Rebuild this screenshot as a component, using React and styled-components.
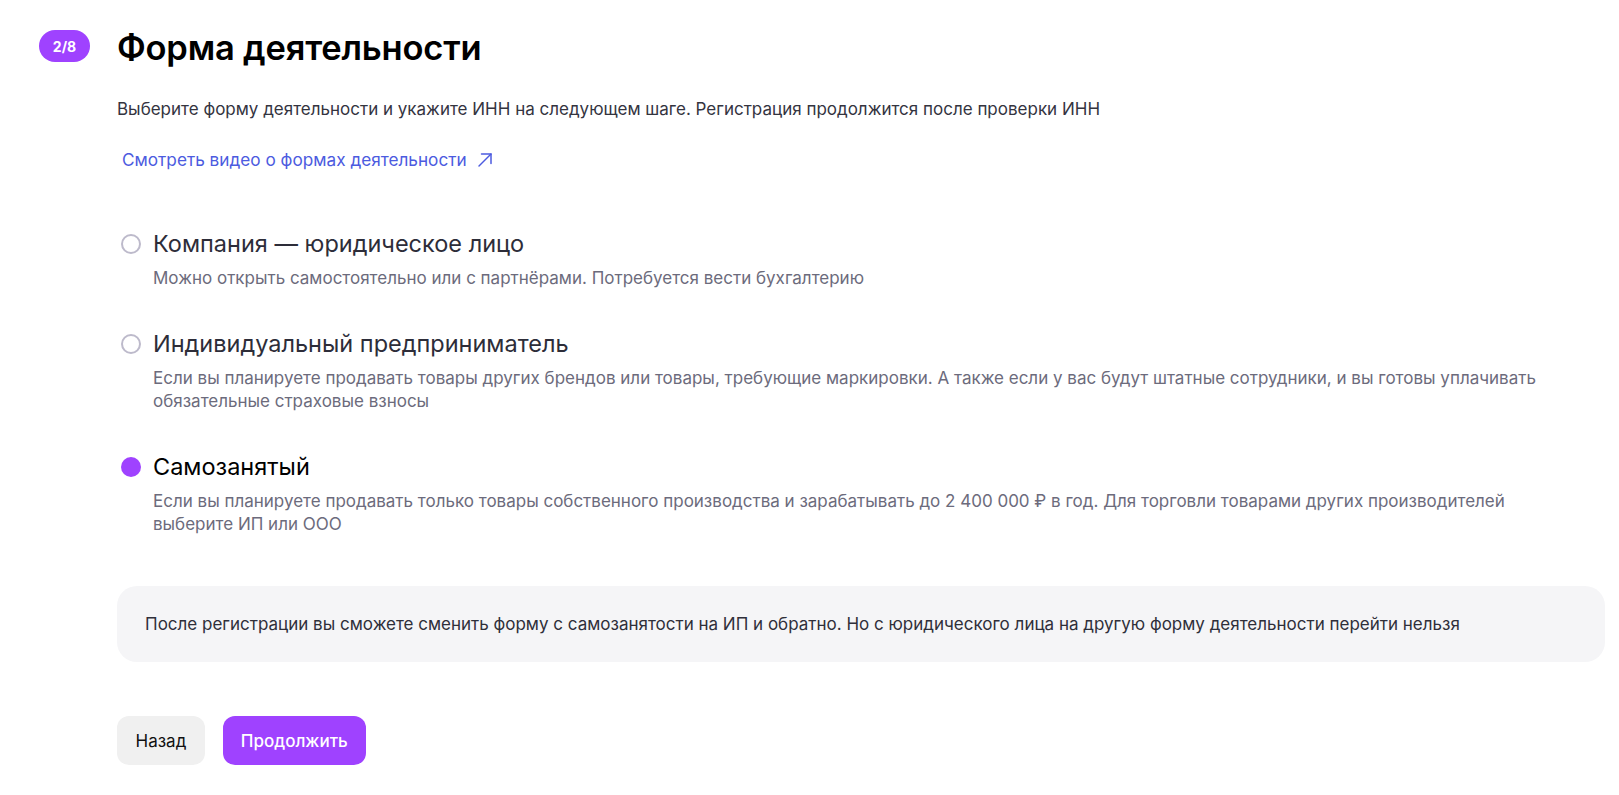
import React, { useState } from 'react';
import styled, { createGlobalStyle } from 'styled-components';

const GlobalStyle = createGlobalStyle`
  body {
    margin: 0;
    background: #ffffff;
    font-family: Inter, "Noto Sans", sans-serif;
    -webkit-font-smoothing: antialiased;
  }
`;

const Page = styled.div`
  display: flex;
  align-items: flex-start;
  gap: 27px;
  padding: 30px 14px 30px 39px;
`;

const Badge = styled.div`
  flex: none;
  width: 51px;
  height: 32px;
  border-radius: 16px;
  background: #9f42ff;
  color: #fff;
  font-size: 14px;
  font-weight: 700;
  display: flex;
  align-items: center;
  justify-content: center;
`;

const Content = styled.div`
  flex: 1;
  display: flex;
  flex-direction: column;
`;

const Title = styled.h1`
  margin: -2px 0 0;
  font-size: 34.5px;
  line-height: 40px;
  font-weight: 600;
  color: #000;
  letter-spacing: -0.2px;
`;

const Subtitle = styled.p`
  margin: 30px 0 0;
  font-size: 17px;
  line-height: 22px;
  color: #34343f;
`;

const VideoLink = styled.a`
  margin: 29px 0 0 5px;
  display: inline-flex;
  align-items: center;
  gap: 10px;
  align-self: flex-start;
  font-size: 17.2px;
  line-height: 22px;
  color: #4c5be0;
  text-decoration: none;
  cursor: pointer;
`;

const Options = styled.div`
  margin-top: 59px;
  display: flex;
  flex-direction: column;
  gap: 40px;
`;

const Option = styled.label`
  display: grid;
  grid-template-columns: 20px 1fr;
  column-gap: 16px;
  row-gap: 9px;
  cursor: pointer;
`;

const Radio = styled.span`
  width: 20px;
  height: 20px;
  margin: 4px 0 0 4px;
  box-sizing: border-box;
  border-radius: 50%;
  border: ${p => (p.checked ? 'none' : '2px solid #bdbacb')};
  background: ${p => (p.checked ? '#9f42ff' : 'transparent')};
`;

const Label = styled.span`
  font-size: 23.5px;
  line-height: 28px;
  color: ${p => (p.checked ? '#000' : '#2d2d39')};
`;

const Desc = styled.span`
  grid-column: 2;
  max-width: 1420px;
  font-size: 17px;
  line-height: 23px;
  color: #6c6b7c;
`;

const Note = styled.div`
  margin-top: 50px;
  background: #f5f5f7;
  border-radius: 20px;
  padding: 27px 28px;
  font-size: 17px;
  line-height: 22px;
  color: #2f2f3a;
`;

const Actions = styled.div`
  margin-top: 54px;
  display: flex;
  gap: 18px;
`;

const Button = styled.button`
  height: 49px;
  padding: 0 ${p => (p.primary ? '18px' : '18.5px')};
  border: none;
  border-radius: 12px;
  font-family: inherit;
  font-size: 17px;
  font-weight: ${p => (p.primary ? 500 : 400)};
  background: ${p => (p.primary ? '#9f42ff' : '#f0f0f0')};
  color: ${p => (p.primary ? '#fff' : '#111')};
  cursor: pointer;
`;

const options = [
  {
    id: 'company',
    label: 'Компания — юридическое лицо',
    desc: 'Можно открыть самостоятельно или с партнёрами. Потребуется вести бухгалтерию',
  },
  {
    id: 'ip',
    label: 'Индивидуальный предприниматель',
    desc: 'Если вы планируете продавать товары других брендов или товары, требующие маркировки. А также если у вас будут штатные сотрудники, и вы готовы уплачивать обязательные страховые взносы',
  },
  {
    id: 'self',
    label: 'Самозанятый',
    desc: 'Если вы планируете продавать только товары собственного производства и зарабатывать до 2 400 000 ₽ в год. Для торговли товарами других производителей выберите ИП или ООО',
  },
];

const ArrowIcon = () => (
  <svg width="16" height="16" viewBox="0 0 16 16" fill="none" stroke="currentColor" strokeWidth="1.5" strokeLinecap="round" strokeLinejoin="round">
    <path d="M2 14 14 2" />
    <path d="M4.5 2H14v9.5" />
  </svg>
);

const App = () => {
  const [value, setValue] = useState('self');
  return (
    <>
      <GlobalStyle />
      <Page>
        <Badge>2/8</Badge>
        <Content>
          <Title>Форма деятельности</Title>
          <Subtitle>
            Выберите форму деятельности и укажите ИНН на следующем шаге. Регистрация продолжится после проверки ИНН
          </Subtitle>
          <VideoLink>
            Смотреть видео о формах деятельности
            <ArrowIcon />
          </VideoLink>
          <Options>
            {options.map(o => (
              <Option key={o.id} onClick={() => setValue(o.id)}>
                <Radio checked={value === o.id} />
                <Label checked={value === o.id}>{o.label}</Label>
                <Desc>{o.desc}</Desc>
              </Option>
            ))}
          </Options>
          <Note>
            После регистрации вы сможете сменить форму с самозанятости на ИП и обратно. Но с юридического лица на другую форму деятельности перейти нельзя
          </Note>
          <Actions>
            <Button>Назад</Button>
            <Button primary>Продолжить</Button>
          </Actions>
        </Content>
      </Page>
    </>
  );
};

export default App;
